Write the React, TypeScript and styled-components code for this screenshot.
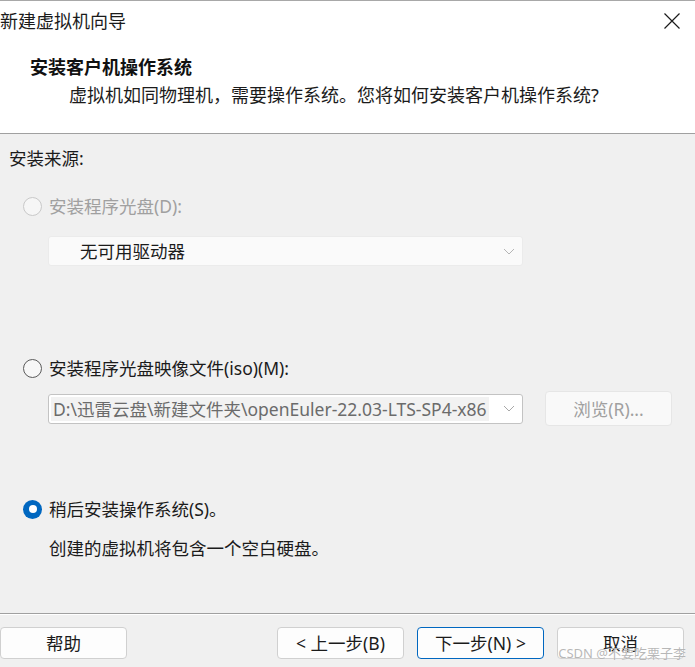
import React from "react";
import styled, { createGlobalStyle, css } from "styled-components";

const GlobalStyle = createGlobalStyle`
  html, body {
    margin: 0;
    padding: 0;
    background: #f0f0f0;
  }
  body {
    font-family: "Noto Sans", "Noto Sans CJK SC", sans-serif;
    color: #1b1b1b;
  }
  * {
    box-sizing: border-box;
  }
`;

const Window = styled.div`
  position: relative;
  width: 695px;
  height: 667px;
  display: flex;
  flex-direction: column;
  background: #f0f0f0;
  overflow: hidden;
`;

const Header = styled.div`
  height: 134px;
  background: #ffffff;
  border-top: 1px solid #a8a8a8;
  border-bottom: 1px solid #a0a0a0;
  display: flex;
  flex-direction: column;
`;

const TitleBar = styled.div`
  height: 40px;
  display: flex;
  align-items: center;
  justify-content: space-between;
  padding-right: 13px;
`;

const WindowTitle = styled.span`
  font-size: 18px;
  line-height: 40px;
  color: #1b1b1b;
`;

const CloseButton = styled.button`
  width: 20px;
  height: 20px;
  padding: 0;
  border: none;
  background: transparent;
  display: flex;
  align-items: center;
  justify-content: center;
`;

const PageTitle = styled.div`
  margin: 13px 0 0 30px;
  font-size: 18px;
  font-weight: 700;
  line-height: 26px;
  color: #111;
`;

const PageSubtitle = styled.div`
  margin: 2px 0 0 69px;
  font-size: 18px;
  line-height: 26px;
  color: #1b1b1b;
`;

const Body = styled.div`
  flex: 1;
  display: flex;
  flex-direction: column;
  padding: 11px 0 0 9px;
`;

const SectionLabel = styled.div`
  font-size: 17.5px;
  line-height: 26px;
  color: #1b1b1b;
`;

const RadioRow = styled.label<{ $top: number }>`
  display: flex;
  align-items: center;
  gap: 7px;
  margin: ${(p) => p.$top}px 0 0 14px;
  height: 26px;
`;

const RadioCircle = styled.span<{ $state: "disabled" | "off" | "on" }>`
  width: 19px;
  height: 19px;
  border-radius: 50%;
  flex-shrink: 0;
  display: flex;
  align-items: center;
  justify-content: center;
  ${(p) =>
    p.$state === "disabled"
      ? css`
          border: 1px solid #c9c9c9;
          background: #f6f6f6;
        `
      : p.$state === "off"
      ? css`
          border: 1px solid #5a5a5a;
          background: #f7f7f7;
        `
      : css`
          background: #0067c0;
          &::after {
            content: "";
            width: 8px;
            height: 8px;
            border-radius: 50%;
            background: #ffffff;
          }
        `}
`;

const RadioText = styled.span<{ $disabled?: boolean }>`
  font-size: 17.5px;
  line-height: 26px;
  color: ${(p) => (p.$disabled ? "#a0a0a0" : "#1b1b1b")};
`;

const FieldRow = styled.div<{ $top: number }>`
  display: flex;
  align-items: center;
  gap: 22px;
  margin: ${(p) => p.$top}px 0 0 39px;
`;

const Combo = styled.div<{ $disabled?: boolean }>`
  width: 475px;
  height: 30px;
  display: flex;
  align-items: center;
  border-radius: 3px;
  overflow: hidden;
  ${(p) =>
    p.$disabled
      ? css`
          background: #fafafa;
          border: 1px solid #ebebeb;
        `
      : css`
          background: #ffffff;
          border: 1px solid #c3c3c3;
        `}
`;

const ComboValue = styled.div<{ $disabled?: boolean }>`
  height: 24px;
  margin-left: ${(p) => (p.$disabled ? "31px" : "2px")};
  padding: 0 ${(p) => (p.$disabled ? "0" : "2px")};
  font-size: 17.5px;
  line-height: 24px;
  white-space: nowrap;
  background: ${(p) => (p.$disabled ? "transparent" : "#f2f2f2")};
  color: ${(p) => (p.$disabled ? "#1b1b1b" : "#6b6b6b")};
`;

const Chevron = styled.span`
  width: 26px;
  margin-left: auto;
  display: flex;
  justify-content: center;
  flex-shrink: 0;
`;

const BrowseButton = styled.button`
  width: 127px;
  height: 35px;
  border: 1px solid #e6e6e6;
  border-radius: 4px;
  background: #f9f9f9;
  font-family: inherit;
  font-size: 17.5px;
  color: #a0a0a0;
  padding: 0;
`;

const Description = styled.div`
  margin: 13px 0 0 40px;
  font-size: 17.5px;
  line-height: 26px;
  color: #1b1b1b;
`;

const Footer = styled.div`
  height: 54px;
  border-top: 1px solid #a0a0a0;
  box-shadow: inset 0 1px 0 #ffffff;
  display: flex;
  align-items: flex-start;
  padding: 13px 11px 0 0;
`;

const Spacer = styled.div`
  flex: 1;
`;

const ButtonGroup = styled.div`
  display: flex;
  gap: 13px;
`;

const DialogButton = styled.button<{ $primary?: boolean }>`
  width: 127px;
  height: 32px;
  border-radius: 4px;
  background: #fdfdfd;
  border: 1px solid ${(p) => (p.$primary ? "#0067c0" : "#d0d0d0")};
  font-family: inherit;
  font-size: 17.5px;
  line-height: 30px;
  color: #1b1b1b;
  padding: 0;
`;

const Watermark = styled.div`
  position: absolute;
  right: 9px;
  bottom: 5px;
  font-size: 13px;
  color: rgba(160, 160, 160, 0.75);
  text-shadow: 0 0 1px rgba(255, 255, 255, 0.8);
  pointer-events: none;
`;

const ChevronIcon = ({ color }: { color: string }) => (
  <svg width="12" height="7" viewBox="0 0 12 7">
    <path d="M1 1 L6 6 L11 1" fill="none" stroke={color} strokeWidth="1" />
  </svg>
);

export default function App() {
  return (
    <>
      <GlobalStyle />
      <Window>
        <Header>
          <TitleBar>
            <WindowTitle>新建虚拟机向导</WindowTitle>
            <CloseButton aria-label="关闭">
              <svg width="16" height="16" viewBox="0 0 16 16">
                <path d="M0.5 0.5 L15.5 15.5 M15.5 0.5 L0.5 15.5" stroke="#1b1b1b" strokeWidth="1.2" />
              </svg>
            </CloseButton>
          </TitleBar>
          <PageTitle>安装客户机操作系统</PageTitle>
          <PageSubtitle>虚拟机如同物理机，需要操作系统。您将如何安装客户机操作系统?</PageSubtitle>
        </Header>

        <Body>
          <SectionLabel>安装来源:</SectionLabel>

          <RadioRow $top={22}>
            <RadioCircle $state="disabled" />
            <RadioText $disabled>安装程序光盘(D):</RadioText>
          </RadioRow>
          <FieldRow $top={17}>
            <Combo $disabled>
              <ComboValue $disabled>无可用驱动器</ComboValue>
              <Chevron>
                <ChevronIcon color="#b5b5b5" />
              </Chevron>
            </Combo>
          </FieldRow>

          <RadioRow $top={89}>
            <RadioCircle $state="off" />
            <RadioText>安装程序光盘映像文件(iso)(M):</RadioText>
          </RadioRow>
          <FieldRow $top={10}>
            <Combo>
              <ComboValue>D:\迅雷云盘\新建文件夹\openEuler-22.03-LTS-SP4-x86</ComboValue>
              <Chevron>
                <ChevronIcon color="#a8a8a8" />
              </Chevron>
            </Combo>
            <BrowseButton>浏览(R)...</BrowseButton>
          </FieldRow>

          <RadioRow $top={70}>
            <RadioCircle $state="on" />
            <RadioText>稍后安装操作系统(S)。</RadioText>
          </RadioRow>
          <Description>创建的虚拟机将包含一个空白硬盘。</Description>
        </Body>

        <Footer>
          <DialogButton>帮助</DialogButton>
          <Spacer />
          <ButtonGroup>
            <DialogButton>&lt; 上一步(B)</DialogButton>
            <DialogButton $primary>下一步(N) &gt;</DialogButton>
            <DialogButton>取消</DialogButton>
          </ButtonGroup>
        </Footer>

        <Watermark>CSDN @不要吃栗子李</Watermark>
      </Window>
    </>
  );
}
